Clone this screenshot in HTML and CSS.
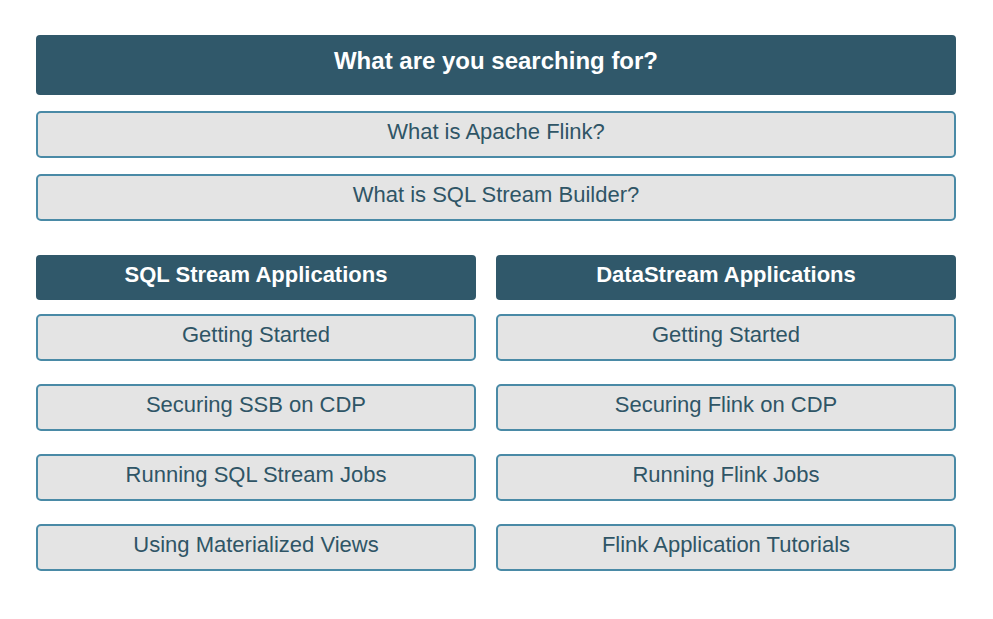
FILE: index.html
```html
<!DOCTYPE html>
<html lang="en">
<head>
  <meta charset="UTF-8">
  <title>Cloudera Streaming Analytics</title>
  <link rel="stylesheet" href="styles.css">
</head>
<body>
  <div class="page">
    <div class="search-header">What are you searching for?</div>
    <a class="tile" href="#">What is Apache Flink?</a>
    <a class="tile" href="#">What is SQL Stream Builder?</a>

    <div class="columns">
      <div class="column">
        <div class="column-header">SQL Stream Applications</div>
        <a class="tile" href="#">Getting Started</a>
        <a class="tile" href="#">Securing SSB on CDP</a>
        <a class="tile" href="#">Running SQL Stream Jobs</a>
        <a class="tile" href="#">Using Materialized Views</a>
      </div>
      <div class="column">
        <div class="column-header">DataStream Applications</div>
        <a class="tile" href="#">Getting Started</a>
        <a class="tile" href="#">Securing Flink on CDP</a>
        <a class="tile" href="#">Running Flink Jobs</a>
        <a class="tile" href="#">Flink Application Tutorials</a>
      </div>
    </div>
  </div>
</body>
</html>
```

FILE: styles.css
```css
* {
  box-sizing: border-box;
}

body {
  margin: 0;
  font-family: 'Liberation Sans', Arial, sans-serif;
  background-color: #fff;
}

.page {
  width: 920px;
  margin: 35px 0 0 36px;
  display: flex;
  flex-direction: column;
}

.search-header {
  height: 60px;
  padding-top: 12px;
  background-color: #30586a;
  color: #fff;
  border-radius: 4px;
  text-align: center;
  font-weight: bold;
  font-size: 24px;
  line-height: 1.15;
  margin-bottom: 16px;
}

.tile {
  display: block;
  height: 47px;
  padding-top: 6px;
  border: 2px solid #4a8aa6;
  border-radius: 5px;
  background-color: #e4e4e4;
  color: #2f5566;
  text-align: center;
  text-decoration: none;
  font-size: 22px;
  line-height: 1.15;
  margin-bottom: 16px;
}

.columns {
  display: grid;
  grid-template-columns: 440px 460px;
  gap: 20px;
  margin-top: 18px;
}

.column {
  display: flex;
  flex-direction: column;
}

.column-header {
  height: 45px;
  padding-top: 7px;
  background-color: #30586a;
  color: #fff;
  border-radius: 4px;
  text-align: center;
  font-weight: bold;
  font-size: 22px;
  line-height: 1.15;
  margin-bottom: 14px;
}

.column .tile {
  margin-bottom: 23px;
}
```
